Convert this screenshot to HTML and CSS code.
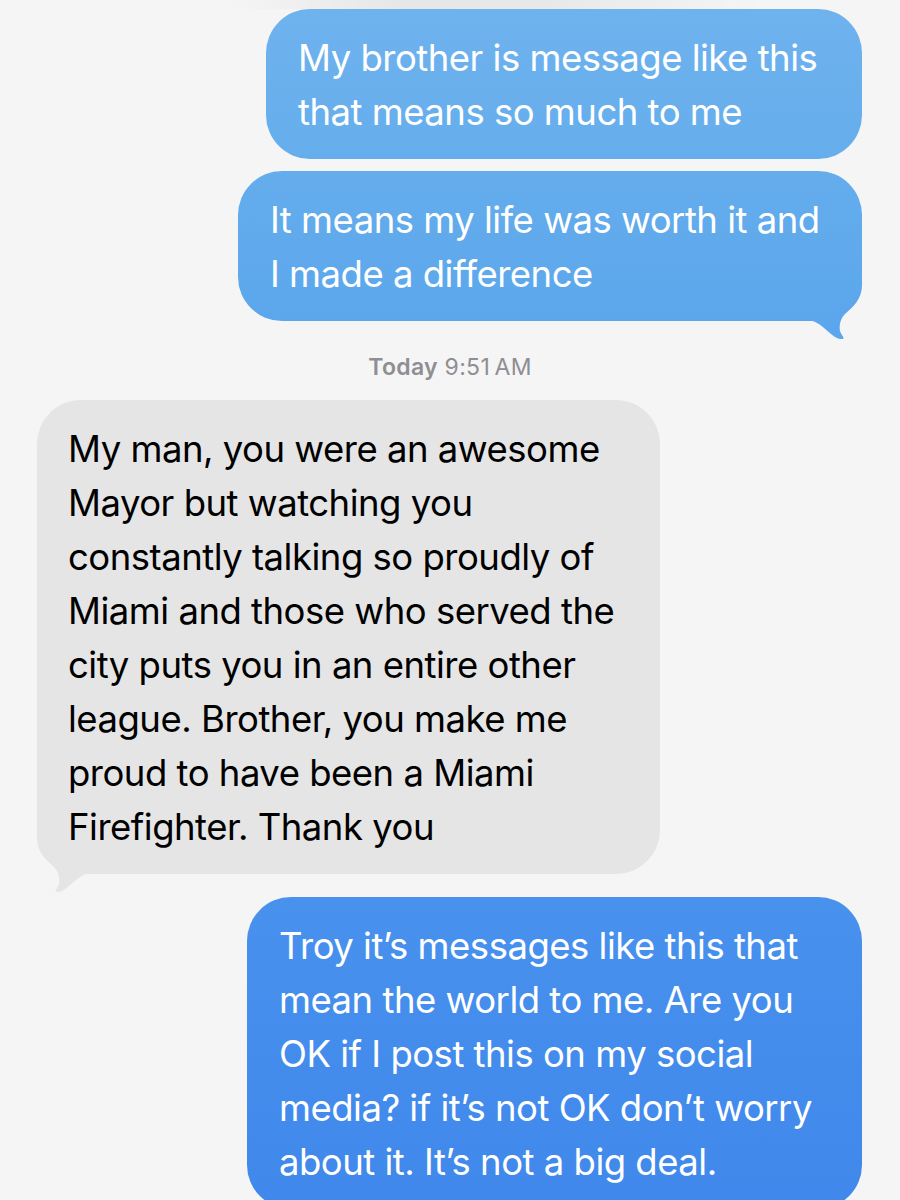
FILE: index.html
```html
<!DOCTYPE html>
<html lang="en">
<head>
    <meta charset="UTF-8">
    <meta name="viewport" content="width=device-width, initial-scale=1.0">
    <title>Messages</title>
    <link rel="stylesheet" href="styles.css">
</head>
<body>
    <div class="top-shade"></div>
    <div class="thread">
        <div class="msg sent msg-1">
            My brother is message like this<br>
            that means so much to me
        </div>
        <div class="msg sent msg-2">
            It means my life was worth it and<br>
            I made a difference
            <svg class="tail tail-sent" viewBox="0 0 60 60" width="60" height="60">
                <path d="M60 0 V6 C60 20 51 28 43 35 C38 40 37 47 38 52 C39 55.5 42 58 41.5 59.5 C40.5 60.5 37.5 60 35 59 C28 55.5 21 46 11 42 L0 42 V0 Z"/>
            </svg>
        </div>

        <div class="stamp"><b>Today</b> 9:51&#8201;AM</div>

        <div class="msg received msg-3">
            My man, you were an awesome<br>
            Mayor but watching you<br>
            constantly talking so proudly of<br>
            Miami and those who served the<br>
            city puts you in an entire other<br>
            league. Brother, you make me<br>
            proud to have been a Miami<br>
            Firefighter. Thank you
            <svg class="tail tail-received" viewBox="0 0 60 60" width="60" height="60">
                <path d="M0 0 V6 C0 20 9 28 17 35 C22 40 23 47 22 52 C21 55.5 18 58 18.5 59.5 C19.5 60.5 22.5 60 25 59 C32 55.5 39 46 49 42 L60 42 V0 Z"/>
            </svg>
        </div>

        <div class="msg sent msg-4">
            Troy it&rsquo;s messages like this that<br>
            mean the world to me. Are you<br>
            OK if I post this on my social<br>
            media? if it&rsquo;s not OK don&rsquo;t worry<br>
            about it. It&rsquo;s not a big deal.
        </div>
    </div>
</body>
</html>
```

FILE: styles.css
```css
body {
    margin: 0;
    background-color: #f5f5f5;
    font-family: Inter, "Noto Sans", sans-serif;
    overflow: hidden;
}
.top-shade {
    height: 9px;
    background: linear-gradient(to right, rgba(0, 0, 0, 0) 25%, rgba(0, 0, 0, 0.06) 45%, rgba(0, 0, 0, 0.05) 62%, rgba(0, 0, 0, 0) 85%);
}
.thread {
    display: flex;
    flex-direction: column;
}
.msg {
    position: relative;
    box-sizing: border-box;
    padding: 22px 0 20px 32px;
    border-radius: 44px;
    font-size: 36.5px;
    letter-spacing: -0.5px;
    line-height: 54px;
    white-space: nowrap;
}
.sent {
    align-self: flex-end;
    margin-right: 38px;
    color: #ffffff;
    /* one gradient for the whole screen, like iMessage */
    background: linear-gradient(to bottom, #6fb3ee 0, #65adec 160px, #5ba6ec 330px, #4891ed 900px, #4088eb 1200px) fixed;
}
.received {
    align-self: flex-start;
    margin-left: 37px;
    padding-left: 31px;
    color: #000000;
    background-color: #e5e5e5;
}
.msg-1 {
    width: 596px;
}
.msg-2 {
    width: 624px;
    margin-top: 12px;
}
.msg-3 {
    width: 623px;
}
.msg-4 {
    width: 615px;
    margin-top: 23px;
}
/* tails sit behind the bubble, only the hook shows */
.tail {
    position: absolute;
    bottom: -18px;
    z-index: -1;
}
.tail-sent {
    right: 0;
    fill: #5ba6ec;
}
.tail-received {
    left: 0;
    fill: #e5e5e5;
}
.stamp {
    margin: 32px 0 19px;
    text-align: center;
    font-size: 23px;
    letter-spacing: 0.3px;
    line-height: 28px;
    color: #8e8e93;
}
.stamp b {
    font-weight: 600;
}
```
